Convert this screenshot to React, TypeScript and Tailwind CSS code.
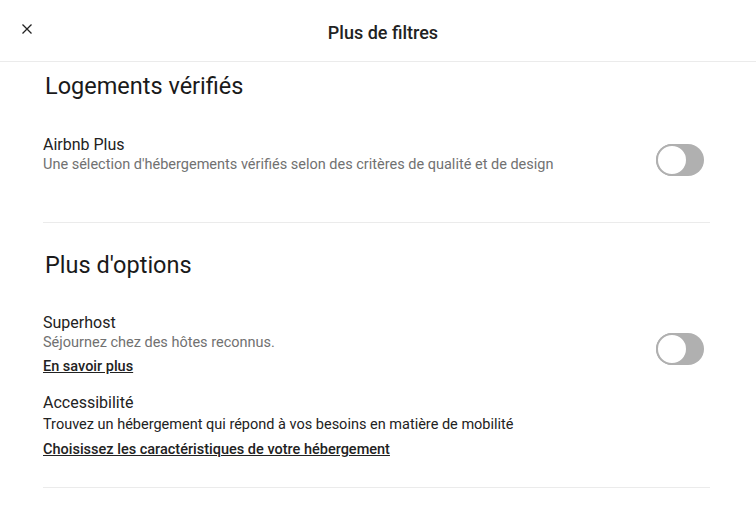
import React from 'react';

function Toggle({ className = '' }: { className?: string }) {
  return (
    <button className={`relative w-[48px] h-[32px] rounded-full bg-[#b0b0b0] shrink-0 ${className}`}>
      <span className="absolute left-0 top-0 w-[32px] h-[32px] rounded-full bg-white border-2 border-[#b0b0b0]" />
    </button>
  );
}

export default function App() {
  return (
    <div className="w-[756px] h-[507px] bg-white text-[#222222] overflow-hidden" style={{ fontFamily: 'Roboto, "Noto Sans", Arial, sans-serif' }}>
      {/* Header */}
      <div className="relative h-[62px] flex items-center justify-center border-b border-[#ebebeb]">
        <button className="absolute left-[20px] top-[22px] w-[14px] h-[14px] flex items-center justify-center">
          <svg viewBox="0 0 32 32" className="w-[12px] h-[12px]" fill="none" stroke="#222" strokeWidth="3.5">
            <path d="M4 4l24 24M28 4L4 28" />
          </svg>
        </button>
        <h1 className="text-[18px] font-medium mt-[4px] ml-[10px]">Plus de filtres</h1>
      </div>

      <div className="pl-[43px] pr-[46px]">
        {/* Logements vérifiés */}
        <div className="pt-[10px] pb-[46px] border-b border-[#ebebeb]">
          <h2 className="text-[23.5px] font-normal pl-[2px] leading-[28px] text-[#1a1a1a]">Logements vérifiés</h2>
          <div className="mt-[35px] flex items-start justify-between pr-[6px]">
            <div>
              <div className="text-[16px] leading-[20px]">Airbnb Plus</div>
              <div className="text-[14.5px] leading-[20px] text-[#717171]">Une sélection d'hébergements vérifiés selon des critères de qualité et de design</div>
            </div>
            <Toggle className="mt-[9px]" />
          </div>
        </div>

        {/* Plus d'options */}
        <div className="pt-[28px] pb-[27px] border-b border-[#ebebeb]">
          <h2 className="text-[23.5px] font-normal pl-[2px] leading-[28px] text-[#1a1a1a]">Plus d'options</h2>
          <div className="mt-[34px] flex items-start justify-between pr-[6px]">
            <div>
              <div className="text-[16px] leading-[20px]">Superhost</div>
              <div className="text-[14.5px] leading-[20px] text-[#717171]">Séjournez chez des hôtes reconnus.</div>
              <a className="block mt-[4px] text-[14.5px] leading-[20px] font-medium underline">En savoir plus</a>
            </div>
            <Toggle className="mt-[20px]" />
          </div>
          <div className="mt-[16px]">
            <div className="text-[16px] leading-[20px]">Accessibilité</div>
            <div className="mt-[2px] text-[14.5px] leading-[20px] text-[#222222]">Trouvez un hébergement qui répond à vos besoins en matière de mobilité</div>
            <a className="block mt-[5px] text-[14.5px] leading-[20px] font-medium underline">Choisissez les caractéristiques de votre hébergement</a>
          </div>
        </div>
      </div>
    </div>
  );
}
